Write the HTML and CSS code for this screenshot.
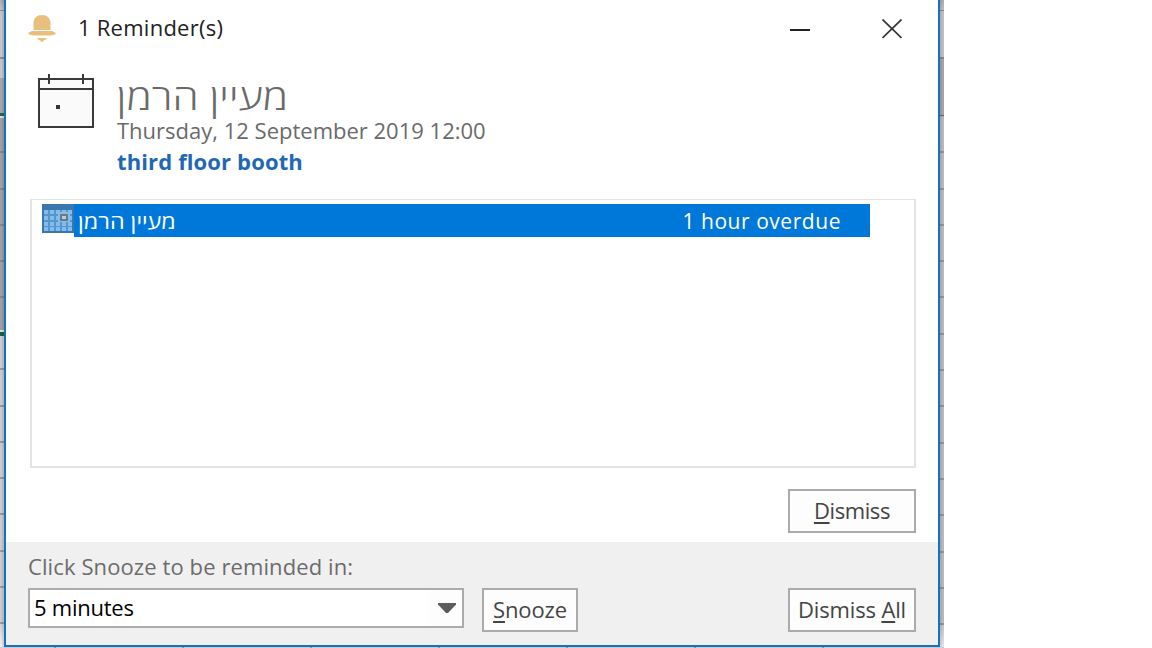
FILE: index.html
```
<!DOCTYPE html>
<html lang="en">
<head>
<meta charset="utf-8">
<title>1 Reminder(s)</title>
<link rel="stylesheet" href="styles.css">
</head>
<body>
<div class="desktop">
  <div class="edge edge-left"></div>
  <main class="dialog">
    <header class="titlebar">
      <svg class="bell" width="28" height="28" viewBox="0 0 28 28" fill="#e8bf7d">
        <path d="M5.500 16V9.500C5.500 4 9 1 14 1s8.500 3 8.500 8.500V16z"/>
        <path d="M4 17h20l3.500 1.800v1.500L23 21.500H5L.5 20.300v-1.500z"/>
        <path d="M9.500 24h9v1.300l-2.500.7-1 1.700h-2L12 26l-2.500-.7z"/>
      </svg>
      <h1 class="caption">1 Reminder(s)</h1>
      <svg class="minimize" width="20" height="20" viewBox="0 0 20 20"><path d="M0 11h20" stroke="#222" stroke-width="2"/></svg>
      <svg class="close" width="20" height="20" viewBox="0 0 20 20"><path d="M.5.500l19 18.500M19.500.500L.5 19" stroke="#333" stroke-width="1.700"/></svg>
    </header>
    <section class="summary">
      <svg class="calendar" width="56" height="54" viewBox="0 0 56 54" fill="none" stroke="#3a3a3a" stroke-width="2">
        <path fill="#fafafa" d="M1 5h54v48H1z"/>
        <path d="M1 15h54M11 0v10M45 0v10"/>
        <path fill="#333" stroke="none" d="M18 31h4v4h-4z"/>
      </svg>
      <div class="details">
        <div class="subject" dir="rtl" lang="he">מעיין הרמן</div>
        <div class="when">Thursday, 12 September 2019 12:00</div>
        <div class="place">third floor booth</div>
      </div>
    </section>
    <section class="list">
      <div class="item">
        <svg width="32" height="29" viewBox="0 0 32 29" shape-rendering="crispEdges">
          <path fill="#3a77ab" d="M0 0h32v29H0z"/>
          <path fill="#5796ca" d="M2 6h28v21H2z"/>
          <path d="M2 8h28M2 14h28M2 20h28M2 25h28" stroke="#83bcee" stroke-width="4" stroke-dasharray="4 2"/>
          <path fill="#83bcee" d="M16 8h12v10H16z"/>
          <path d="M19 11h6v5h-6z" fill="#a5d2f7" stroke="#777" stroke-width="2"/>
        </svg>
        <div class="selected">
          <span class="item-subject" dir="rtl" lang="he">מעיין הרמן</span>
          <span class="overdue">1 hour overdue</span>
        </div>
      </div>
    </section>
    <div class="actions"><button class="button wide"><span class="t-dismiss"><u>D</u>ismiss</span></button></div>
    <footer class="footer">
      <div class="hint">Click Snooze to be reminded in:</div>
      <div class="controls">
        <div class="combo"><span class="value">5 minutes</span>
          <span class="drop"><svg width="18" height="10" viewBox="0 0 18 10"><path fill="#5c5c5f" d="M0 0h18v1.500L10 10H8L0 1.500z"/></svg></span>
        </div>
        <button class="button"><span class="t-snooze"><u>S</u>nooze</span></button>
        <button class="button wide push"><span class="t-all">Dismiss <u>A</u>ll</span></button>
      </div>
    </footer>
  </main>
  <div class="edge edge-right"></div>
  <div class="edge-bottom"></div>
</div>
</body>
</html>
```
FILE: styles.css
```
* { box-sizing: border-box; }
body {
  margin: 0;
  background: #fff;
  font-family: "Open Sans", "Noto Sans", "DejaVu Sans", sans-serif;
  overflow: hidden;
}
.desktop {
  display: grid;
  grid-template: 647px 1px / 4px 936px 4px;
  width: 944px;
}
.edge-left {
  background:
    linear-gradient(90deg, transparent 2px, rgba(0,0,0,.09) 2px),
    linear-gradient(#8d8d8d, #8d8d8d) 0 10px / 4px 1px no-repeat,
    linear-gradient(#8d8d8d, #8d8d8d) 0 57px / 4px 2px no-repeat,
    linear-gradient(#1c6b42, #1c6b42) 0 113px / 4px 3px no-repeat,
    linear-gradient(#1c5d3a, #1c5d3a) 0 332px / 4px 4px no-repeat,
    repeating-linear-gradient(transparent 0 34.300px, #858585 34.300px 36.300px) 0 116.700px / 4px 214px no-repeat,
    repeating-linear-gradient(transparent 0 34.300px, #999 34.300px 36.300px) 0 334px / 4px 300px no-repeat,
    linear-gradient(#aaa 0, #c5c5c5 12px 78px, #a6a6a6 78px 116px, #ddd 116px 118px, #9f9f9f 118px 330px, #ddd 330px 332px, #cacaca 336px 620px, #eee 647px);
}
.edge-right {
  background:
    linear-gradient(90deg, rgba(0,0,0,.07) 2px, transparent 2px),
    linear-gradient(#888, #888) 0 10px / 4px 1px no-repeat,
    linear-gradient(#888, #888) 0 57px / 4px 2px no-repeat,
    linear-gradient(#666, #666) 0 115px / 4px 1px no-repeat,
    repeating-linear-gradient(transparent 0 34.300px, #929292 34.300px 36.300px) 0 116.700px / 4px 508px no-repeat,
    linear-gradient(#aaa 0, #bebebe 12px 57px, #a4a4a4 60px 115px, #b8b8b8 118px 620px, #e4e4e4 647px);
}
.edge-bottom {
  grid-column: 1 / 4;
  background: repeating-linear-gradient(90deg, #ccc 0 54px, #999 54px 56px, #ccc 56px 128px);
}
.dialog {
  display: flex;
  flex-direction: column;
  border: solid #1370c2;
  border-width: 0 2px 2px;
  background: #fff;
}
.titlebar { display: flex; height: 74px; padding-left: 22px; }
.bell { margin-top: 14px; }
.caption {
  margin: 11px 0 0 22px;
  width: 710px;
  font-size: 22px;
  font-weight: 400;
  line-height: 32px;
  letter-spacing: .25px;
  color: #222;
}
.minimize, .close { margin-top: 19px; }
.minimize { margin-left: 2px; }
.close { margin-left: 72px; }
.summary { display: flex; gap: 22px; height: 125px; padding-left: 32px; }
.details { white-space: nowrap; color: #6a6a6a; font-size: 22px; }
.subject {
  width: 172px;
  margin-top: 4px;
  font-size: 36px;
  line-height: 38px;
  font-weight: 300;
  transform: scaleX(1.17);
  transform-origin: right;
}
.when { margin-top: -1px; padding-left: 1px; line-height: 30px; }
.place { padding-left: 1px; line-height: 32px; font-weight: 700; letter-spacing: .13px; color: #1f68b5; }
.list {
  height: 269px;
  margin: 0 22px 0 24px;
  padding: 4px 0 0 10px;
  border: 2px solid #e3e3e3;
  border-top-width: 1px;
}
.item { display: flex; }
.selected {
  display: flex;
  justify-content: space-between;
  width: 796px;
  height: 33px;
  padding: 0 29px 0 4px;
  background: #0078d9;
  color: #fff;
  font-size: 21px;
  line-height: 34px;
  white-space: nowrap;
}
.item-subject { transform: scaleX(1.11); transform-origin: left; }
.overdue { letter-spacing: .55px; }
.actions { display: flex; justify-content: flex-end; height: 74px; padding: 21px 22px 0 0; }
.button {
  width: 96px;
  height: 44px;
  padding: 0 0 1px;
  border: 2px solid #ababab;
  background: #fdfdfd;
  color: #444;
  font: 22px/39px "Open Sans", sans-serif;
  white-space: nowrap;
}
.button u { text-decoration-thickness: 2px; text-underline-offset: 3px; }
.t-dismiss { letter-spacing: -.4px; }
.t-snooze, .t-all { letter-spacing: -.15px; }
.wide { width: 128px; }
.push { margin-left: auto; }
.footer { height: 103px; padding: 9px 22px 0; background: #f0f0f0; }
.hint { height: 37px; line-height: 30px; font-size: 22px; letter-spacing: .1px; color: #6c6c6c; }
.controls { display: flex; }
.combo {
  display: flex;
  width: 436px;
  height: 40px;
  margin-right: 18px;
  border: 2px solid #ababab;
  background: #fff;
  color: #000;
  font-size: 22px;
  line-height: 34px;
}
.value { padding-left: 4px; letter-spacing: -.25px; }
.drop { display: flex; width: 34px; margin-left: auto; padding: 13px 0 0 10px; background: #fdfdfd; }
.drop svg { flex: none; }
```
